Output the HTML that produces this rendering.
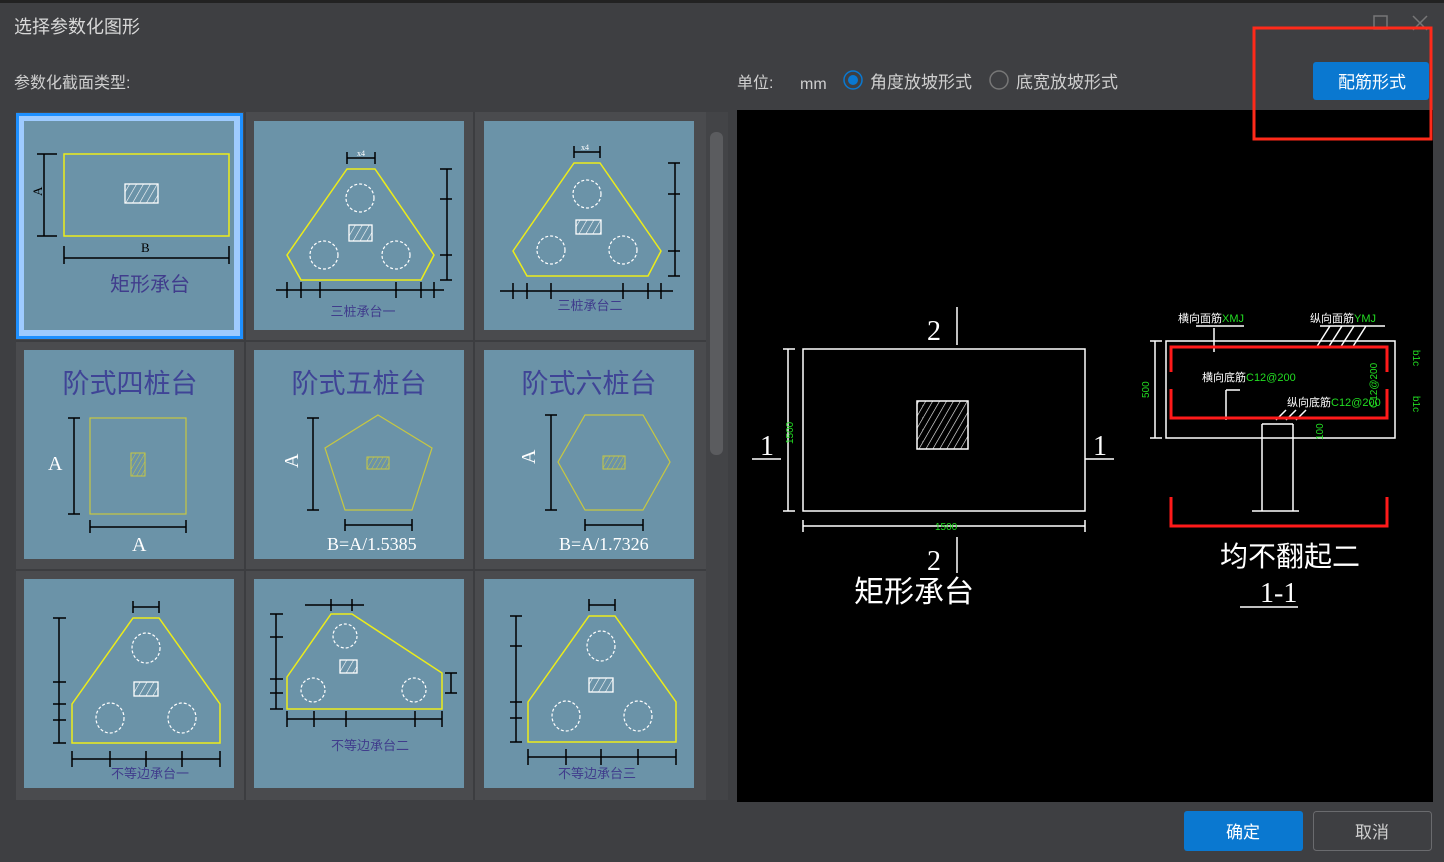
<!DOCTYPE html>
<html><head><meta charset="utf-8"><style>
html,body{margin:0;padding:0;background:#3e3f42;width:1444px;height:862px;overflow:hidden}
svg{display:block}
text{font-family:"Liberation Sans","Noto Sans CJK SC",sans-serif}
.s{font-family:"Liberation Serif","Noto Serif CJK SC",serif}
</style></head><body>
<svg width="1444" height="862" viewBox="0 0 1444 862" xmlns="http://www.w3.org/2000/svg">
<defs>
<pattern id="h" width="6" height="6" patternUnits="userSpaceOnUse" patternTransform="rotate(30)"><line x1="0" y1="0" x2="0" y2="6" stroke="#fff" stroke-width="1.2"/></pattern>
<pattern id="hy" width="4" height="4" patternUnits="userSpaceOnUse" patternTransform="rotate(30)"><line x1="0" y1="0" x2="0" y2="4" stroke="#c8c840" stroke-width="1"/></pattern>
</defs>
<rect x="0" y="0" width="1444" height="3" fill="#222"/>
<text x="14" y="33" font-size="18" fill="#d8d8d8">选择参数化图形</text>
<rect x="1374" y="16" width="13" height="13" fill="none" stroke="#777" stroke-width="1.5"/>
<path d="M1413 16 L1427 30 M1427 16 L1413 30" stroke="#777" stroke-width="1.5"/>
<text x="14" y="88" font-size="16" fill="#cfcfcf">参数化截面类型:</text>
<text x="737" y="88" font-size="16" fill="#cfcfcf">单位:</text>
<text x="800" y="89" font-size="16" fill="#cfcfcf">mm</text>
<circle cx="853" cy="80" r="9" fill="none" stroke="#0a78d0" stroke-width="1.5"/><circle cx="853" cy="80" r="5" fill="#0a78d0"/>
<text x="870" y="88" font-size="17" fill="#cfcfcf">角度放坡形式</text>
<circle cx="999" cy="80" r="9" fill="none" stroke="#777" stroke-width="1.5"/>
<text x="1016" y="88" font-size="17" fill="#cfcfcf">底宽放坡形式</text>
<rect x="1313" y="62" width="116" height="38" rx="3" fill="#0a78d0"/>
<text x="1372" y="88" font-size="17" fill="#fff" text-anchor="middle">配筋形式</text>

<!-- grid panel -->
<rect x="16" y="112" width="690" height="688" fill="#4a4b4e"/>
<rect x="244" y="112" width="2" height="688" fill="#3c3d40"/>
<rect x="473" y="112" width="2" height="688" fill="#3c3d40"/>
<rect x="16" y="340" width="690" height="2" fill="#3c3d40"/>
<rect x="16" y="569" width="690" height="2" fill="#3c3d40"/>
<rect x="706" y="112" width="22" height="688" fill="#434447"/>
<rect x="710" y="132" width="13" height="323" rx="6" fill="#5b5c5f"/>
<rect x="17.5" y="114.5" width="224" height="223" fill="#9ecbff" stroke="#1e90ff" stroke-width="3"/>
<g fill="#6b93a8">
<rect x="24" y="121" width="210" height="209"/><rect x="254" y="121" width="210" height="209"/><rect x="484" y="121" width="210" height="209"/>
<rect x="24" y="350" width="210" height="209"/><rect x="254" y="350" width="210" height="209"/><rect x="484" y="350" width="210" height="209"/>
<rect x="24" y="579" width="210" height="209"/><rect x="254" y="579" width="210" height="209"/><rect x="484" y="579" width="210" height="209"/>
</g>
<g stroke="#000" stroke-width="1.5" fill="none">
<path d="M44 154V236M37 154H57M37 236H57M64 258H229M64 246V264M229 246V264"/>
<path d="M347 158H375M347 152V164M375 152V164M447 169V280M440 169H452M440 199H452M440 255H452M440 280H452M276 290H444M287 282V298M301 282V298M320 282V298M396 282V298M421 282V298M434 282V298"/>
<path d="M574 152H600M574 146V158M600 146V158M675 163V276M668 163H680M668 194H680M668 251H680M668 276H680M500 291H673M513 283V299M527 283V299M551 283V299M623 283V299M648 283V299M661 283V299"/>
<path d="M74 418V514M68 418H80M68 514H80M90 527H186M90 520V533M186 520V533"/>
<path d="M313 418V510M307 418H319M307 510H319M345 525H412M345 519V531M412 519V531"/>
<path d="M551 415V510M545 415H557M545 510H557M585 525H643M585 519V531M643 519V531"/>
<path d="M59 618V743M53 618H66M53 682H66M53 704H66M53 720H66M53 743H66M72 759H220M72 751V767M110 751V767M146 751V767M182 751V767M220 751V767M133 607H159M133 601V613M159 601V613"/>
<path d="M276 614V709M270 614H283M270 637H283M270 679H283M270 693H283M270 709H283M287 719H442M287 711V727M314 711V727M346 711V727M415 711V727M442 711V727M305 605H364M331 599V611M352 599V611M451 673V693M445 693H457M445 673H457"/>
<path d="M516 616V742M510 616H522M510 646H522M510 702H522M510 718H522M510 742H522M528 757H676M528 749V765M566 749V765M601 749V765M638 749V765M676 749V765M589 605H615M589 599V611M615 599V611"/>
</g>
<g stroke="#ecec1a" stroke-width="1.5" fill="none">
<rect x="64" y="154" width="165" height="82"/>
<polygon points="347,169 375,169 434,255 421,280 301,280 287,255"/>
<polygon points="574,163 600,163 661,251 648,276 527,276 513,251"/>
<polygon points="72,704 133,618 159,618 220,704 220,743 72,743"/>
<polygon points="287,677 331,614 352,614 442,673 442,709 287,709"/>
<polygon points="528,702 589,616 615,616 676,702 676,742 528,742"/>
<g stroke="#c8c840" stroke-width="1.2"><rect x="90" y="418" width="96" height="96"/>
<polygon points="378,415 432,448 412,510 345,510 325,448"/>
<polygon points="585,415 643,415 670,462 643,510 585,510 558,462"/></g>
</g>
<rect x="131" y="453" width="14" height="23" fill="url(#hy)" stroke="#c8c840"/>
<rect x="367" y="457" width="22" height="12" fill="url(#hy)" stroke="#c8c840"/>
<rect x="603" y="456" width="22" height="13" fill="url(#hy)" stroke="#c8c840"/>
<g stroke="#fff" stroke-width="1.3" fill="url(#h)">
<rect x="125" y="184" width="33" height="19"/><rect x="349" y="225" width="23" height="16"/><rect x="576" y="220" width="25" height="14"/>
<rect x="134" y="682" width="24" height="14"/><rect x="340" y="660" width="17" height="13"/><rect x="589" y="678" width="24" height="14"/>
</g>
<g stroke="#fff" stroke-width="1.2" fill="none" stroke-dasharray="3 2">
<circle cx="360" cy="198" r="14"/><circle cx="324" cy="255" r="14"/><circle cx="396" cy="255" r="14"/>
<circle cx="587" cy="194" r="14"/><circle cx="551" cy="250" r="14"/><circle cx="623" cy="250" r="14"/>
<ellipse cx="146" cy="648" rx="14" ry="15"/><ellipse cx="110" cy="718" rx="14" ry="15"/><ellipse cx="182" cy="718" rx="14" ry="15"/>
<ellipse cx="345" cy="636" rx="12" ry="12"/><ellipse cx="313" cy="690" rx="12" ry="12"/><ellipse cx="414" cy="690" rx="12" ry="12"/>
<ellipse cx="601" cy="646" rx="14" ry="15"/><ellipse cx="566" cy="716" rx="14" ry="15"/><ellipse cx="638" cy="716" rx="14" ry="15"/>
</g>
<g fill="#fff" font-size="8" class="s">
<text x="357" y="156" class="s">x4</text><text x="581" y="150" class="s">x4</text>
</g>
<g fill="#000" font-size="13" class="s">
<text x="141" y="252" class="s">B</text>
<text x="38" y="200" transform="rotate(-90 38 196)" class="s">A</text>
</g>
<g fill="#403c8c" text-anchor="middle">
<text x="150" y="291" font-size="20">矩形承台</text>
<text x="363" y="316" font-size="13">三桩承台一</text>
<text x="590" y="310" font-size="13">三桩承台二</text>
<text x="130" y="393" font-size="27" fill="#3f4496">阶式四桩台</text>
<text x="359" y="393" font-size="27" fill="#3f4496">阶式五桩台</text>
<text x="589" y="393" font-size="27" fill="#3f4496">阶式六桩台</text>
<text x="150" y="778" font-size="13">不等边承台一</text>
<text x="370" y="750" font-size="13">不等边承台二</text>
<text x="597" y="778" font-size="13">不等边承台三</text>
</g>
<g fill="#fff" font-size="20" class="s">
<text x="48" y="470" class="s">A</text><text x="132" y="551" class="s">A</text>
<text x="284" y="466" transform="rotate(-90 292 460)" class="s">A</text>
<text x="521" y="462" transform="rotate(-90 529 456)" class="s">A</text>
<text x="327" y="550" font-size="18" class="s">B=A/1.5385</text>
<text x="559" y="550" font-size="18" class="s">B=A/1.7326</text>
</g>

<!-- right panel -->
<rect x="737" y="110" width="696" height="692" fill="#000"/>
<g stroke="#fff" stroke-width="1.5" fill="none">
<rect x="803" y="349" width="282" height="162"/>
<rect x="917" y="401" width="51" height="48" fill="url(#h)"/>
<path d="M957 307V345M957 537V573M752 459H781M1085 459H1114M788 349V511M783 349H795M783 511H795M803 526H1085M803 520V532M1085 520V532"/>
<rect x="1166" y="341" width="229" height="97"/>
<path d="M1262 438V511M1293 438V511M1262 424H1293M1262 424V438M1293 424V438M1252 511H1299M1155 341V438M1150 341H1162M1150 438H1162"/>
<path d="M1240 607H1298M1214 328V352M1196 326H1244M1320 326H1385M1330 326L1316 348M1342 326L1328 348M1354 326L1340 348M1366 326L1352 348M1226 390V420M1226 390H1240M1286 410L1276 420M1296 410L1286 420M1306 410L1296 420"/>
</g>
<g stroke="#ff1a1a" stroke-width="3" fill="none">
<path d="M1171 372V347H1387V372M1171 389V418H1387V389"/>
<path d="M1171 497V526H1387V497"/>
</g>
<g fill="#fff" class="s">
<text x="927" y="340" font-size="28" class="s">2</text>
<text x="927" y="570" font-size="28" class="s">2</text>
<text x="760" y="455" font-size="28" class="s">1</text>
<text x="1093" y="455" font-size="28" class="s">1</text>
<text x="1260" y="602" font-size="28" class="s">1-1</text>
</g>
<text x="914" y="602" font-size="30" fill="#fff" text-anchor="middle" font-family="Noto Serif CJK SC,serif">矩形承台</text>
<text x="1290" y="566" font-size="28" fill="#fff" text-anchor="middle" font-family="Noto Serif CJK SC,serif">均不翻起二</text>
<g fill="#22dd22" font-size="10" font-family="Liberation Mono,monospace">
<text x="935" y="530">1500</text>
<text x="0" y="0" transform="translate(793 444) rotate(-90)">1500</text>
<text x="0" y="0" transform="translate(1149 398) rotate(-90)">500</text>
<text x="0" y="0" transform="translate(1323 440) rotate(-90)">100</text>
<text x="0" y="0" transform="translate(1377 408) rotate(-90)">C12@200</text>
<text x="0" y="0" transform="translate(1413 350) rotate(90)">b1c</text>
<text x="0" y="0" transform="translate(1413 396) rotate(90)">b1c</text>
</g>
<g font-size="11" fill="#fff">
<text x="1178" y="322">横向面筋<tspan fill="#22dd22">XMJ</tspan></text>
<text x="1310" y="322">纵向面筋<tspan fill="#22dd22">YMJ</tspan></text>
<text x="1202" y="381">横向底筋<tspan fill="#22dd22">C12@200</tspan></text>
<text x="1287" y="406">纵向底筋<tspan fill="#22dd22">C12@200</tspan></text>
</g>

<rect x="1254" y="28" width="177" height="111" fill="none" stroke="#ff2a1a" stroke-width="3"/>

<!-- bottom buttons -->
<rect x="1184" y="811" width="119" height="40" rx="3" fill="#0a78d0"/>
<text x="1243" y="838" font-size="17" fill="#fff" text-anchor="middle">确定</text>
<rect x="1313.5" y="811.5" width="118" height="39" rx="3" fill="#3e3f42" stroke="#6a6b6e"/>
<text x="1372" y="838" font-size="17" fill="#cfcfcf" text-anchor="middle">取消</text>
</svg>
</body></html>
